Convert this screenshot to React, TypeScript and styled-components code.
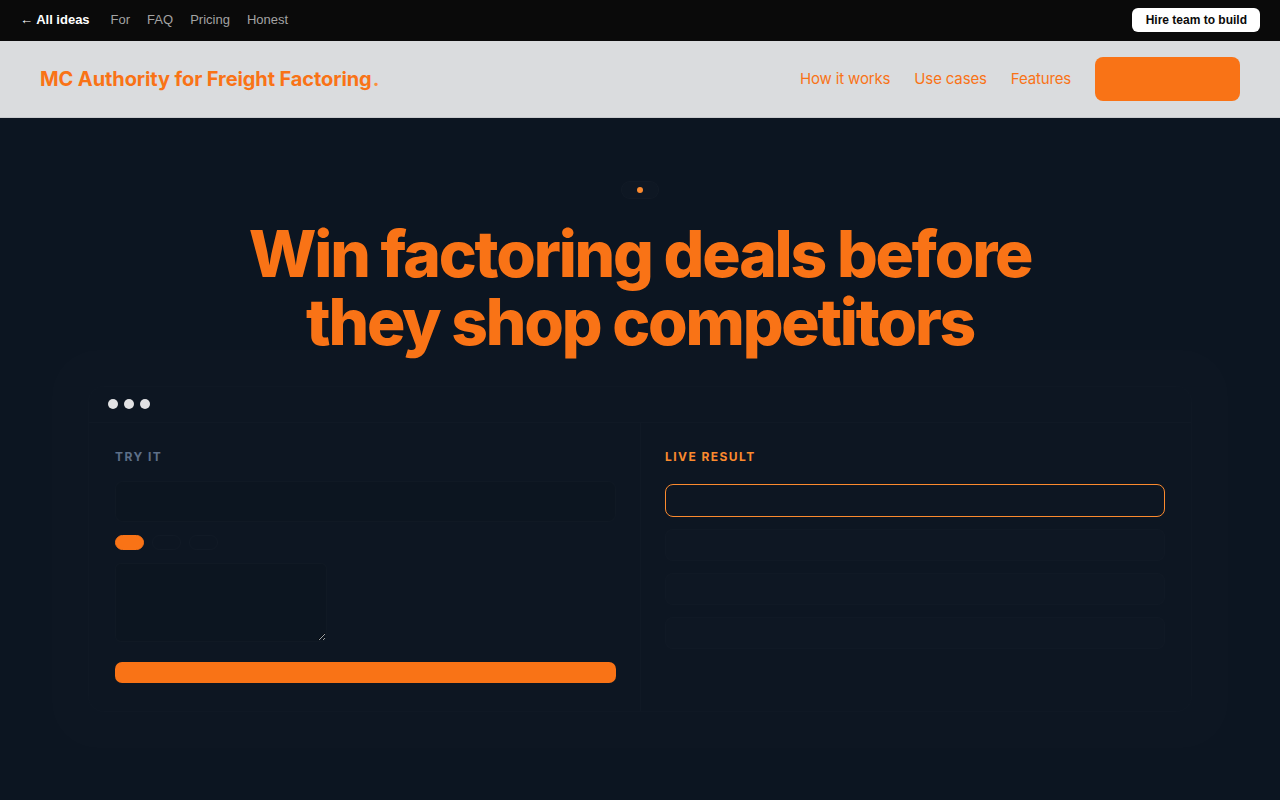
import React, { FC } from 'react';
import styled, { createGlobalStyle } from 'styled-components';

const ORANGE = '#f97316';

const GlobalStyle = createGlobalStyle`
  html, body {
    margin: 0;
    padding: 0;
    background: #0c1521;
  }
  * {
    box-sizing: border-box;
  }
`;

//Top strip
const TopBar = styled.div`
  height: 41px;
  background: #0a0a0a;
  display: flex;
  align-items: center;
  justify-content: space-between;
  padding: 0 20px;
  font-family: 'Liberation Sans', Arial, sans-serif;
  font-size: 13px;
`;
const TopLinks = styled.div`
  display: flex;
  align-items: center;
  gap: 17px;
  margin-top: -2px;
`;
const BackLink = styled.a`
  color: #fff;
  font-weight: 700;
  margin-right: 4px;
  text-decoration: none;
`;
const TopLink = styled.a`
  color: #a3a3a3;
  text-decoration: none;
`;
const HireButton = styled.button`
  background: #fff;
  color: #0a0a0a;
  border: none;
  border-radius: 6px;
  height: 24px;
  padding: 0 13px 0 14px;
  margin-top: -2px;
  font-family: 'Liberation Sans', Arial, sans-serif;
  font-size: 12px;
  font-weight: 700;
`;

//Site nav
const Nav = styled.nav`
  height: 77px;
  background: #dadcde;
  border-bottom: 1px solid #c9cbce;
  display: flex;
  align-items: center;
  justify-content: space-between;
  padding: 0 40px;
  font-family: Inter, 'Noto Sans', sans-serif;
`;
const Logo = styled.div`
  color: ${ORANGE};
  font-size: 20px;
  font-weight: 700;
  letter-spacing: -0.005em;
  span {
    color: #fb923c;
    margin-left: 1px;
  }
`;
const NavRight = styled.div`
  display: flex;
  align-items: center;
  gap: 24px;
`;
const NavLink = styled.a`
  color: ${ORANGE};
  font-size: 15px;
  letter-spacing: -0.01em;
  text-decoration: none;
  margin-top: -2px;
`;
const NavCta = styled.button`
  width: 145px;
  height: 44px;
  border: none;
  border-radius: 8px;
  background: ${ORANGE};
`;

//Hero
const Hero = styled.section`
  background: #0c1521;
  min-height: 682px;
  display: flex;
  flex-direction: column;
  align-items: center;
  padding-top: 63px;
  font-family: Inter, 'Noto Sans', sans-serif;
`;
const Badge = styled.div`
  display: flex;
  align-items: center;
  justify-content: center;
  width: 38px;
  height: 18px;
  border-radius: 9px;
  background: rgba(255, 255, 255, 0.01);
  border: 1px solid rgba(255, 255, 255, 0.015);
`;
const BadgeDot = styled.span`
  width: 6px;
  height: 6px;
  border-radius: 50%;
  background: #fb8a2e;
`;
const Title = styled.h1`
  margin: 21px 0 0;
  color: ${ORANGE};
  font-size: 64px;
  font-weight: 800;
  line-height: 68px;
  letter-spacing: -0.034em;
  text-align: center;
`;

//Demo window
const Card = styled.div`
  width: 1104px;
  margin-top: 30px;
  border-radius: 16px;
  background: #0d1622;
  border: 1px solid rgba(255, 255, 255, 0.012);
  box-shadow: 0 0 0 36px rgba(255, 255, 255, 0.006);
`;
const CardHead = styled.div`
  display: flex;
  gap: 6px;
  padding: 12px 19px 13px;
  border-bottom: 1px solid rgba(255, 255, 255, 0.014);
`;
const WinDot = styled.span`
  width: 10px;
  height: 10px;
  border-radius: 50%;
  background: #e2e2e4;
`;
const CardBody = styled.div`
  display: grid;
  grid-template-columns: 1fr 1fr;
  padding: 0 26px;
  min-height: 288px;
`;
const Column = styled.div<{ $divider?: boolean }>`
  display: flex;
  flex-direction: column;
  padding: 26px ${(p) => (p.$divider ? '0' : '24px')} 26px ${(p) => (p.$divider ? '24px' : '0')};
  border-left: ${(p) => (p.$divider ? '1px solid rgba(255,255,255,0.014)' : 'none')};
`;
const Label = styled.div<{ $accent?: boolean }>`
  font-size: 12px;
  font-weight: 700;
  letter-spacing: 0.12em;
  color: ${(p) => (p.$accent ? '#fb8a2e' : '#5d6f88')};
`;
const Input = styled.div`
  margin-top: 17px;
  height: 41px;
  border-radius: 8px;
  border: 1px solid rgba(255, 255, 255, 0.018);
  background: #0c1520;
`;
const Pills = styled.div`
  display: flex;
  gap: 8px;
  margin-top: 13px;
`;
const Pill = styled.span<{ $active?: boolean }>`
  width: 29px;
  height: 15px;
  border-radius: 8px;
  background: ${(p) => (p.$active ? ORANGE : 'transparent')};
  border: 1px solid ${(p) => (p.$active ? ORANGE : 'rgba(255,255,255,0.02)')};
`;
const TextArea = styled.textarea`
  margin-top: 13px;
  width: 212px;
  height: 79px;
  border-radius: 6px;
  border: 1px solid rgba(255, 255, 255, 0.018);
  background: #0c1520;
  outline: none;
`;
const RunButton = styled.button`
  margin-top: 20px;
  height: 21px;
  border: none;
  border-radius: 7px;
  background: ${ORANGE};
`;
const ResultBox = styled.div<{ $active?: boolean }>`
  height: ${(p) => (p.$active ? '33px' : '32px')};
  border-radius: 8px;
  border: 1px solid ${(p) => (p.$active ? '#fb8a2e' : 'rgba(255,255,255,0.012)')};
  background: ${(p) => (p.$active ? 'transparent' : 'rgba(255,255,255,0.006)')};
  margin-top: ${(p) => (p.$active ? '20px' : '12px')};
`;

const App: FC = () => {
  return (
    <>
      <GlobalStyle />
      <TopBar>
        <TopLinks>
          <BackLink href="#">← All ideas</BackLink>
          <TopLink href="#">For</TopLink>
          <TopLink href="#">FAQ</TopLink>
          <TopLink href="#">Pricing</TopLink>
          <TopLink href="#">Honest</TopLink>
        </TopLinks>
        <HireButton>Hire team to build</HireButton>
      </TopBar>
      <Nav>
        <Logo>
          MC Authority for Freight Factoring<span>.</span>
        </Logo>
        <NavRight>
          <NavLink href="#">How it works</NavLink>
          <NavLink href="#">Use cases</NavLink>
          <NavLink href="#">Features</NavLink>
          <NavCta />
        </NavRight>
      </Nav>
      <Hero>
        <Badge>
          <BadgeDot />
        </Badge>
        <Title>
          Win factoring deals before
          <br />
          they shop competitors
        </Title>
        <Card>
          <CardHead>
            <WinDot />
            <WinDot />
            <WinDot />
          </CardHead>
          <CardBody>
            <Column>
              <Label>TRY IT</Label>
              <Input />
              <Pills>
                <Pill $active />
                <Pill />
                <Pill />
              </Pills>
              <TextArea />
              <RunButton />
            </Column>
            <Column $divider>
              <Label $accent>LIVE RESULT</Label>
              <ResultBox $active />
              <ResultBox />
              <ResultBox />
              <ResultBox />
            </Column>
          </CardBody>
        </Card>
      </Hero>
    </>
  );
};

export default App;
